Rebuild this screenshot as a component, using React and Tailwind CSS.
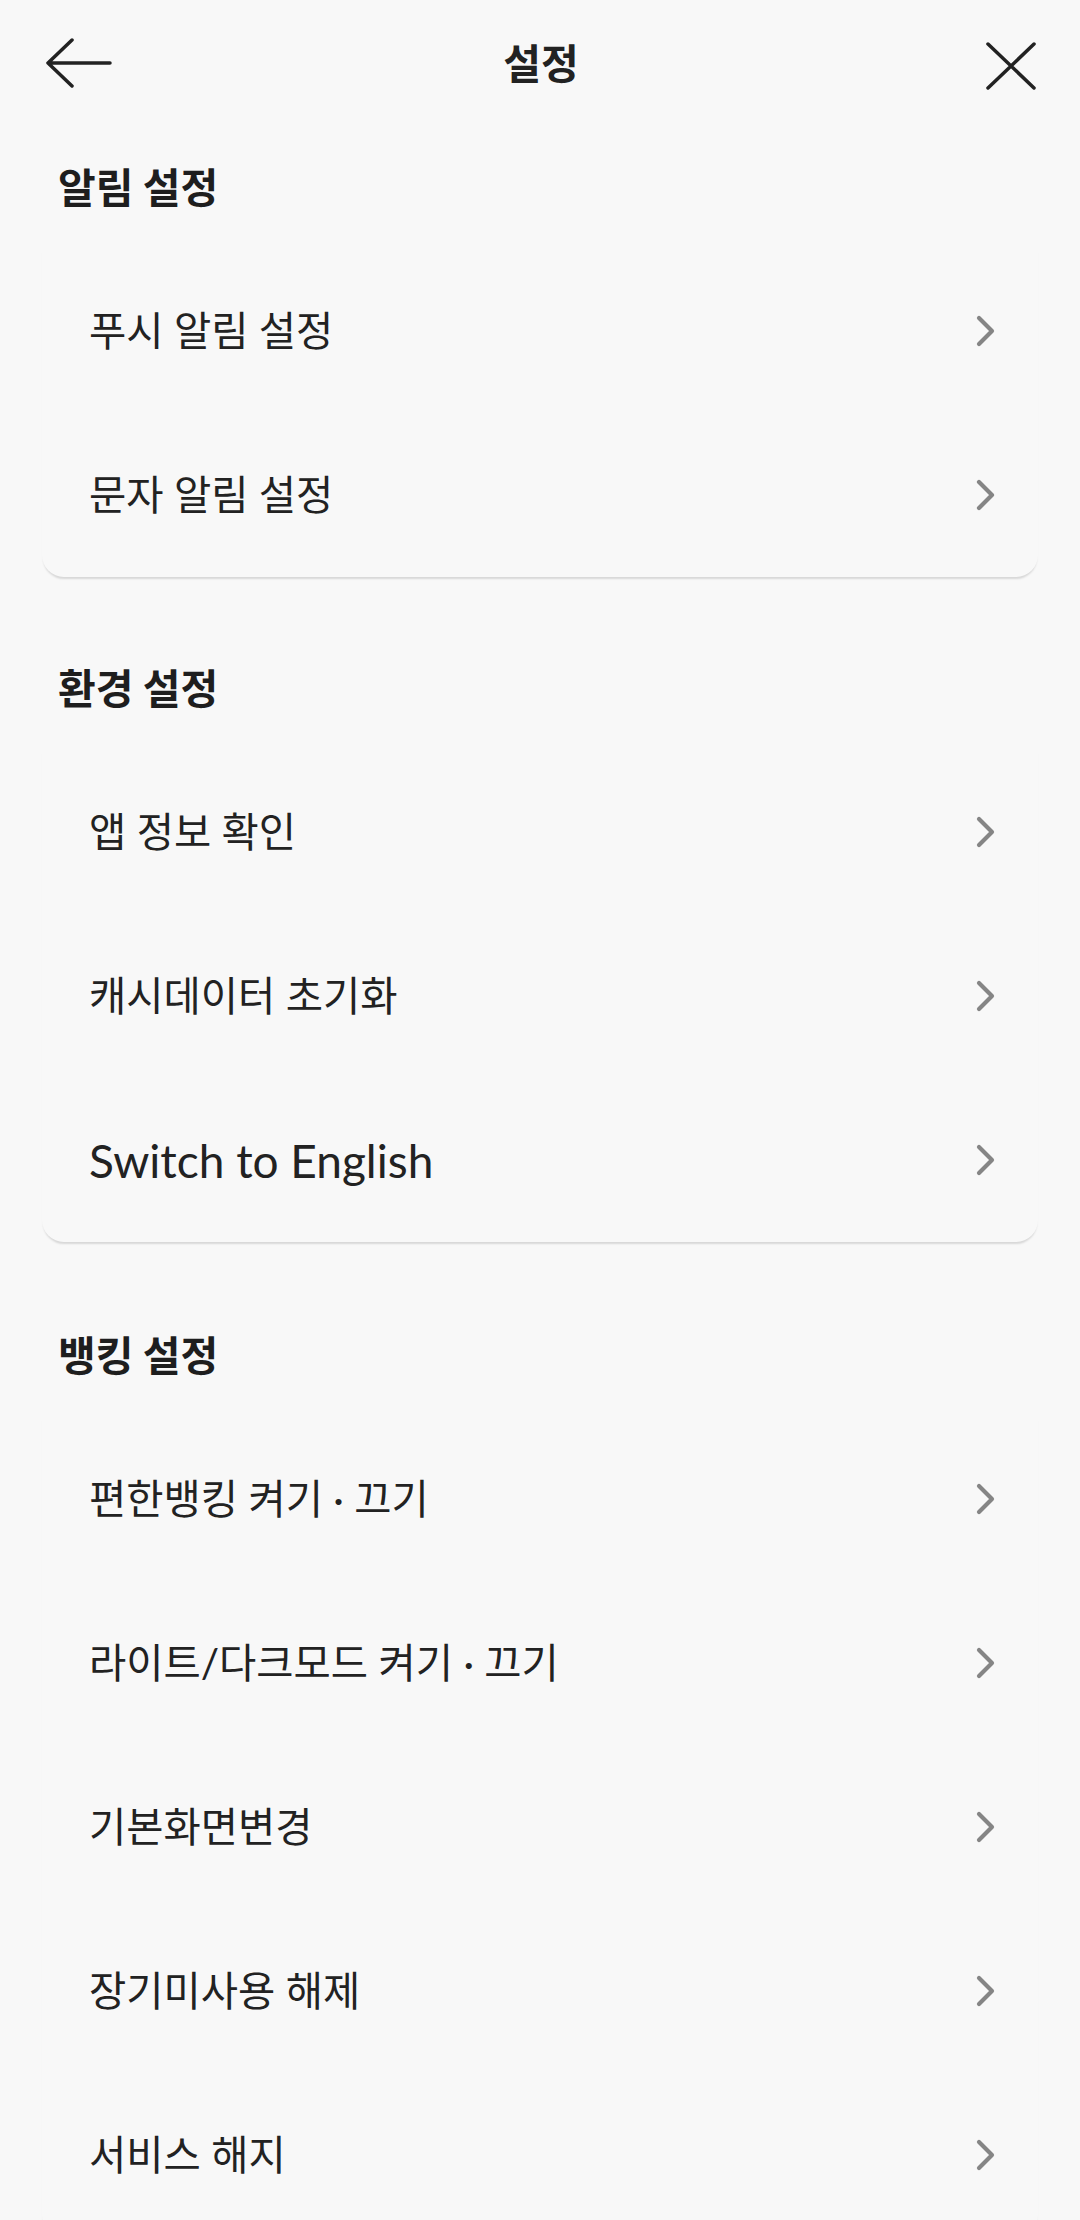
import React from 'react';

const sections = [
  { title: '알림 설정', head: 'h-[127px]', items: ['푸시 알림 설정', '문자 알림 설정'] },
  { title: '환경 설정', head: 'h-[173px]', items: ['앱 정보 확인', '캐시데이터 초기화', 'Switch to English'] },
  {
    title: '뱅킹 설정',
    head: 'h-[175px]',
    items: ['편한뱅킹 켜기 · 끄기', '라이트/다크모드 켜기 · 끄기', '기본화면변경', '장기미사용 해제', '서비스 해지'],
  },
];

function Chevron() {
  return (
    <svg width="24" height="34" viewBox="0 0 24 34" fill="none">
      <path d="M5 4 L18 17 L5 30" stroke="#858585" strokeWidth="4.2" strokeLinecap="round" strokeLinejoin="round" />
    </svg>
  );
}

function Row({ label }) {
  const english = /^[A-Za-z ]+$/.test(label);
  return (
    <div className="h-[164px] flex items-center justify-between pl-[47px] pr-[40px]">
      <span className={english ? 'text-[46px] text-[#222]' : 'text-[40.5px] text-[#222]'}>{label}</span>
      <Chevron />
    </div>
  );
}

export default function App() {
  return (
    <div className="min-h-screen w-[1080px] bg-[#f8f8f8] font-['Lato','Noto_Sans_CJK_KR',sans-serif] overflow-hidden">
      {/* header */}
      <div className="h-[122px] grid grid-cols-[1fr_auto_1fr] items-center pl-[45px] pr-[43px]">
        <svg width="68" height="50" viewBox="0 0 68 50" fill="none" className="mt-[4px]">
          <path d="M3 25 H65 M27 2 L3 25 L27 48" stroke="#222" strokeWidth="3.5" strokeLinecap="round" strokeLinejoin="round" />
        </svg>
        <h1 className="text-[41px] font-bold text-[#222] leading-none font-['Noto_Sans_CJK_KR',sans-serif]">설정</h1>
        <div className="flex justify-end">
          <svg width="52" height="50" viewBox="0 0 52 50" fill="none" className="mt-[10px]">
            <path d="M3 3 L49 47 M49 3 L3 47" stroke="#222" strokeWidth="3.5" strokeLinecap="round" />
          </svg>
        </div>
      </div>

      {sections.map((s) => (
        <div key={s.title}>
          <div className={`${s.head} flex items-end pb-[40px] pl-[58px]`}>
            <h2 className="text-[41px] leading-[48px] font-bold text-[#1e1e1e] font-['Noto_Sans_CJK_KR',sans-serif]">
              {s.title}
            </h2>
          </div>
          <div className="mx-[42px] rounded-b-[22px] shadow-[0_3px_2px_-1px_rgba(0,0,0,0.13)]">
            {s.items.map((it) => (
              <Row key={it} label={it} />
            ))}
          </div>
        </div>
      ))}
    </div>
  );
}
